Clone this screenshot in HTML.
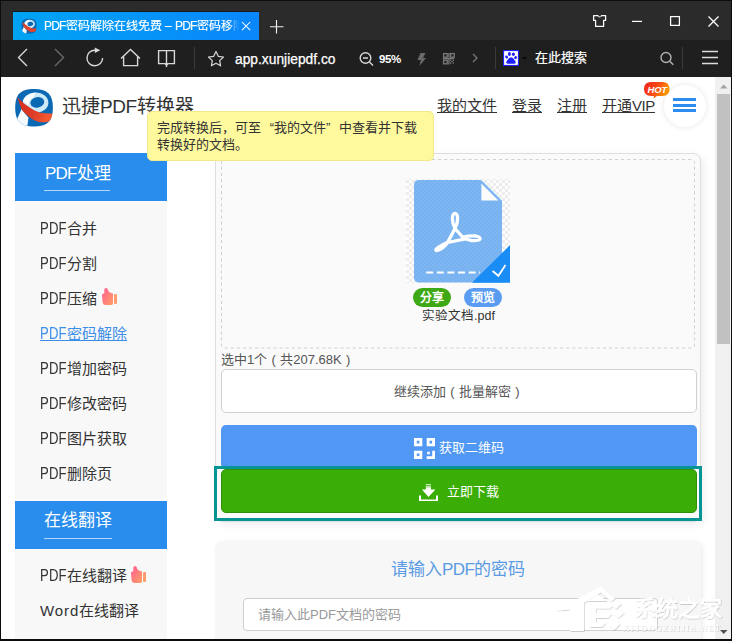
<!DOCTYPE html>
<html lang="zh-CN">
<head>
<meta charset="utf-8">
<style>
*{margin:0;padding:0;box-sizing:border-box}
html,body{width:732px;height:641px;overflow:hidden;background:#fff;font-family:"Liberation Sans",sans-serif;color:#333}
.a{position:absolute}
.t{white-space:nowrap;line-height:1}
svg{display:block;position:absolute;overflow:visible}
.nav{font-size:15px;color:#333;text-decoration:underline;margin-top:1px}
.si{left:40px;font-size:15px;color:#333}
.lp{display:inline-block;font-size:16px;transform:scaleX(0.82);transform-origin:0 0;width:27px;letter-spacing:0.2px}
.q{display:inline-block;width:13px}
.pill{top:292px;font-size:12px;color:#fff;font-weight:bold}
.pc{display:inline-block;width:13px;text-align:center}
</style>
</head>
<body>
<!-- window frame -->
<div class="a" style="left:0;top:0;width:732px;height:641px;background:#0d0d0d"></div>
<!-- titlebar -->
<div class="a" style="left:1px;top:1px;width:730px;height:39px;background:#2b2b2b"></div>
<!-- tab -->
<div class="a" style="left:13px;top:11px;width:246px;height:1px;background:#1a1a1a"></div>
<div class="a" style="left:13px;top:12px;width:246px;height:28px;background:linear-gradient(90deg,#00a4f4,#0a86fb)"></div>
<!-- toolbar -->
<div class="a" style="left:1px;top:40px;width:730px;height:37px;background:#1f1f1f"></div>
<!-- favicon -->
<svg style="left:21px;top:18px" width="16" height="16" viewBox="0 0 38 39">
<g clip-path="url(#sq)">
<rect width="38" height="39" fill="#0b68b3"/>
<path d="M6.3 21.1L13.5 29.7L12.2 39L1 39L0 33L2 31.2L5.6 23.3Z" fill="#f4fafd"/>
<ellipse cx="20.6" cy="14.6" rx="12.8" ry="10.2" fill="#cdeaf8"/>
<path d="M7.9 13Q9.5 6.5 20.5 4.4L18.5 9.6Q14 10.5 13.5 17.5Z" fill="#f7fcfe"/>
<ellipse cx="22.3" cy="14.4" rx="7" ry="5.3" transform="rotate(-12 22.3 14.4)" fill="#0b68b3"/>
<path d="M2.4 9.3C8 15 16 22 25.7 24.7C30 25.6 34 25.5 38 25.4L38 32.6C32 34.5 28 34.6 24.3 34C18 33 10 26 6.3 21.1Z" fill="#e5402a"/>
</g>
</svg>
<div class="a t" style="left:44px;top:19.5px;font-size:12px;color:#fff;-webkit-text-stroke:0.15px #fff;width:196px;overflow:hidden;-webkit-mask-image:linear-gradient(90deg,#000 185px,rgba(0,0,0,.35) 190px,transparent 196px)"><span style="letter-spacing:-0.8px">PDF</span>密码解除在线免费 – <span style="letter-spacing:-0.8px">PDF</span>密码移除</div>
<svg style="left:242px;top:22px" width="9" height="9"><path d="M0 0L8.2 8.2M8.2 0L0 8.2" stroke="#fff" stroke-width="1.05"/></svg>
<svg style="left:270px;top:20px" width="14" height="14"><path d="M6.5 0V13.5M0 6.7H13.5" stroke="#f0f0f0" stroke-width="1.15"/></svg>
<!-- window controls -->
<svg style="left:0;top:0" width="732" height="40" viewBox="0 0 732 40">
<path d="M593.6 15.6H597.8Q599.75 18 601.7 15.6H605.6V20.4H603.6V26.4H595.6V20.4H593.6Z" fill="none" stroke="#fff" stroke-width="1.25" stroke-linejoin="round"/>
<path d="M598.3 16Q599.75 17.6 601.2 16" stroke="#999" stroke-width="1" fill="none"/>
<rect x="632" y="20.8" width="10" height="1.2" fill="#fff"/>
<rect x="670.6" y="16.6" width="8.8" height="8.8" fill="none" stroke="#fff" stroke-width="1.25"/>
</svg>
<svg style="left:708px;top:16px" width="11" height="11"><path d="M0.5 0.5L10.5 10.5M10.5 0.5L0.5 10.5" stroke="#fff" stroke-width="1.3"/></svg>
<!-- toolbar icons -->
<svg style="left:0;top:40px" width="732" height="37" viewBox="0 40 732 37">
<g fill="none" stroke-width="1.4">
<path d="M27 49L18.5 57.5L27 66" stroke="#d8d8d8"/>
<path d="M55 49L63.5 57.5L55 66" stroke="#6a6a6a"/>
<path d="M102.6 58A7.8 7.8 0 1 1 95 50.2" stroke="#d8d8d8"/>
<path d="M121 58.6L130.5 49.4L140 58.6M123.6 56V65.6H137.6V56" stroke="#d8d8d8"/>
<path d="M158.6 50.6H166.5V65.5L165 63.6H158.6ZM174.4 50.6H166.5V65.5L168 63.6H174.4Z" stroke="#d8d8d8"/>
<path d="M194.5 47V69" stroke="#3a3a3a" stroke-width="1"/>
<path d="M216 51.5L218.3 56.3L223.5 57L219.7 60.6L220.6 65.8L216 63.3L211.4 65.8L212.3 60.6L208.5 57L213.7 56.3Z" stroke="#d8d8d8" stroke-linejoin="round" stroke-width="1.2"/>
<circle cx="365.5" cy="58" r="5.3" stroke="#d8d8d8"/>
<path d="M369.5 62L373 65.5M363 58H368" stroke="#d8d8d8"/>
<path d="M495.5 47V69" stroke="#3a3a3a" stroke-width="1"/>
<path d="M473 54L477 58L473 62" stroke="#777" stroke-width="1.3"/>
<circle cx="666" cy="57.5" r="5" stroke="#b0b0b0"/>
<path d="M669.8 61.3L673.3 64.8" stroke="#b0b0b0" stroke-width="1.5"/>
<path d="M682.5 47V69" stroke="#3a3a3a" stroke-width="1"/>
<path d="M702 51.5H718M702 57.5H718M702 63.5H718" stroke="#dcdcdc" stroke-width="1.5"/>
</g>
<path d="M94.8 47.6L100.3 50.3L94.8 53Z" fill="#d8d8d8"/>
<path d="M420.5 53H425.5L423 58H426L419.5 66L420.8 60H417.5Z" fill="#6a6a6a"/>
<g fill="none" stroke="#7a7a7a" stroke-width="1.3">
<rect x="443.6" y="53.6" width="3.6" height="3.6"/><rect x="450.6" y="53.6" width="3.6" height="3.6"/><rect x="443.6" y="60.2" width="3.6" height="3.6"/>
<path d="M448.9 53V57.8M448.9 59.6V64.5M442.8 58.6H454.2"/>
</g>
<g fill="#7a7a7a"><rect x="450" y="59.6" width="1.3" height="1.3"/><rect x="452.7" y="59.6" width="1.3" height="1.3"/><rect x="451.35" y="61" width="1.3" height="1.3"/><rect x="450" y="62.4" width="1.3" height="1.3"/><rect x="452.7" y="62.4" width="1.3" height="1.3"/></g>
<rect x="503" y="50" width="16" height="16" fill="#1f1fff"/>
<rect x="504.1" y="51.1" width="13.8" height="13.8" fill="#fff"/>
<g fill="#1f1fff"><ellipse cx="509.4" cy="54" rx="1.5" ry="1.9"/><ellipse cx="513.4" cy="54.2" rx="1.5" ry="1.8"/><ellipse cx="506.6" cy="57" rx="1.3" ry="1.6" transform="rotate(-30 506.6 57)"/><ellipse cx="515.6" cy="57.6" rx="1.3" ry="1.6" transform="rotate(30 515.6 57.6)"/><path d="M511 57.2Q509 57.5 507.5 60Q505.8 62 506.5 63.2Q507.5 64 511 63.8Q514.5 64 515.5 63.2Q516.2 62 514.5 60Q513 57.5 511 57.2Z"/></g>
<path d="M522 57H527L524.5 60Z" fill="#0a0a0a"/>
</svg>
<div class="a t" id="url" style="left:235px;top:53px;font-size:13.8px;color:#fff;-webkit-text-stroke:0.25px #fff">app.xunjiepdf.co</div>
<div class="a t" style="left:379px;top:53.5px;font-size:11.5px;color:#fff;font-weight:bold;letter-spacing:-0.45px">95%</div>
<div class="a t" style="left:535px;top:51px;font-size:13px;color:#fff;-webkit-text-stroke:0.2px #fff">在此搜索</div>

<!-- content -->
<div class="a" id="content" style="left:1px;top:77px;width:714px;height:562px;background:#fff;overflow:hidden"></div>
<!-- page header -->
<svg style="left:15px;top:88px" width="38" height="39" viewBox="0 0 38 39">
<defs><clipPath id="sq"><path d="M19 1C32 1 37.9 6 37.9 19.7S32 38.4 19 38.4S0.2 33.5 0.2 19.7S6 1 19 1Z"/></clipPath>
<linearGradient id="rg" x1="0" y1="0" x2="1" y2="0.3"><stop offset="0" stop-color="#d42a1c"/><stop offset="0.6" stop-color="#dc3d28"/><stop offset="1" stop-color="#f5582f"/></linearGradient></defs>
<g clip-path="url(#sq)">
<rect width="38" height="39" fill="#0b68b3"/>
<path d="M6.3 21.1L13.5 29.7L12.2 39L1 39L0 33L2 31.2L5.6 23.3Z" fill="#f4fafd"/>
<ellipse cx="20.6" cy="14.6" rx="12.8" ry="10.2" fill="#cdeaf8"/>
<path d="M7.9 13Q9.5 6.5 20.5 4.4L18.5 9.6Q14 10.5 13.5 17.5Z" fill="#f7fcfe"/>
<ellipse cx="22.3" cy="14.4" rx="7" ry="5.3" transform="rotate(-12 22.3 14.4)" fill="#0b68b3"/>
<path d="M2.4 9.3C8 15 16 22 25.7 24.7C30 25.6 34 25.5 38 25.4L38 32.6C32 34.5 28 34.6 24.3 34C18 33 10 26 6.3 21.1Z" fill="url(#rg)"/>
</g>
</svg>
<div class="a t" id="brand" style="left:62px;top:97px;font-size:19px;color:#333">迅捷<span style="letter-spacing:-0.5px">PDF</span>转换器</div>
<div class="a t nav" style="left:437px;top:97px">我的文件</div>
<div class="a t nav" style="left:512px;top:97px">登录</div>
<div class="a t nav" style="left:557px;top:97px">注册</div>
<div class="a t nav" style="left:602px;top:97px">开通<span style="letter-spacing:-0.4px">VIP</span></div>
<!-- hot badge -->
<svg style="left:644px;top:82px" width="26" height="17" viewBox="0 0 26 17">
<defs><linearGradient id="hg" x1="0" y1="0" x2="1" y2="0.4"><stop offset="0" stop-color="#f0201e"/><stop offset="0.55" stop-color="#f84a14"/><stop offset="1" stop-color="#ff9a00"/></linearGradient></defs>
<path d="M7 0H18.5Q25.5 0 25.5 7Q25.5 14 18.5 14H13L9.5 16.5L10 14H7Q0 14 0 7Q0 0 7 0Z" fill="url(#hg)"/>
<text x="13.2" y="10.8" font-size="9.5" font-weight="bold" font-style="italic" fill="#fff" text-anchor="middle" font-family="Liberation Sans" letter-spacing="-0.3">HOT</text>
</svg>
<!-- menu circle -->
<div class="a" style="left:664px;top:85px;width:42px;height:42px;border-radius:50%;background:#fff;box-shadow:0 0 6px rgba(0,0,0,.10)"></div>
<div class="a" style="left:673px;top:98px;width:23px;height:3px;background:#2d8cf0"></div>
<div class="a" style="left:673px;top:104px;width:23px;height:3px;background:#2d8cf0"></div>
<div class="a" style="left:673px;top:109px;width:23px;height:3px;background:#2d8cf0"></div>

<!-- sidebar -->
<div class="a" style="left:15px;top:153px;width:152px;height:490px;background:#f8f8f8"></div>
<div class="a" style="left:15px;top:153px;width:152px;height:48px;background:#288dec"></div>
<div class="a t" id="side1" style="left:45px;top:165px;font-size:17px;color:#fff"><span style="letter-spacing:-0.8px">PDF</span>处理</div>
<div class="a" style="left:44px;top:190px;width:66px;height:1px;background:rgba(255,255,255,.65)"></div>
<div class="a t si" style="top:221px"><span class="lp">PDF</span>合并</div>
<div class="a t si" style="top:256px"><span class="lp">PDF</span>分割</div>
<div class="a t si" style="top:291px"><span class="lp">PDF</span>压缩</div>
<div class="a" style="left:40px;top:340px;width:87px;height:1px;background:#3c8ee8"></div>
<div class="a t si" style="top:326px;color:#3c8ee8"><span class="lp">PDF</span>密码解除</div>
<div class="a t si" style="top:361px"><span class="lp">PDF</span>增加密码</div>
<div class="a t si" style="top:396px"><span class="lp">PDF</span>修改密码</div>
<div class="a t si" style="top:431px"><span class="lp">PDF</span>图片获取</div>
<div class="a t si" style="top:466px"><span class="lp">PDF</span>删除页</div>
<div class="a" style="left:15px;top:501px;width:152px;height:48px;background:#288dec"></div>
<div class="a t" id="side2" style="left:44px;top:512px;font-size:17px;color:#fff">在线翻译</div>
<div class="a" style="left:44px;top:538px;width:68px;height:1px;background:rgba(255,255,255,.65)"></div>
<div class="a t si" style="top:568px"><span class="lp">PDF</span>在线翻译</div>
<div class="a t si" style="top:603px"><span style="letter-spacing:0.9px">Word</span>在线翻译</div>
<!-- thumbs -->
<svg style="left:98px;top:284px" width="24" height="24" viewBox="0 0 24 24">
<defs><linearGradient id="tg" x1="0" y1="0" x2="1" y2="1"><stop offset="0" stop-color="#ff5a92"/><stop offset="1" stop-color="#ffa266"/></linearGradient></defs>
<path d="M4 11Q4 9.5 5.5 9.5H6.3V6Q6.3 4 8 4Q9.6 4 10 6Q10.6 8.6 15 9.5V20Q14.6 21 13 21H7.5Q5 21 4.6 18Z" fill="url(#tg)"/>
<rect x="16" y="10" width="3" height="10" rx="1" fill="#ff9c6e"/>
</svg>
<svg style="left:127px;top:562px" width="24" height="24" viewBox="0 0 24 24">
<path d="M4 11Q4 9.5 5.5 9.5H6.3V6Q6.3 4 8 4Q9.6 4 10 6Q10.6 8.6 15 9.5V20Q14.6 21 13 21H7.5Q5 21 4.6 18Z" fill="url(#tg)"/>
<rect x="16" y="10" width="3" height="10" rx="1" fill="#ff9c6e"/>
</svg>
<!-- card 1 -->
<div class="a" style="left:215px;top:153px;width:486px;height:369px;background:#fafafa;border:1px solid #dedede;border-radius:8px;box-shadow:3px 3px 8px rgba(0,0,0,.07)"></div>
<svg style="left:215px;top:153px" width="486" height="200" viewBox="215 153 486 200"><rect x="221.5" y="159.5" width="473" height="188.5" rx="3" fill="none" stroke="#d0d0d0" stroke-width="1" stroke-dasharray="3.2 2.9"/></svg>
<!-- file icon -->
<svg style="left:406px;top:178px" width="106" height="106" viewBox="406 178 106 106">
<defs><pattern id="ck" x="406" y="180" width="6" height="6" patternUnits="userSpaceOnUse"><rect width="6" height="6" fill="#fdfdfd"/><rect width="3" height="3" fill="#ececec"/><rect x="3" y="3" width="3" height="3" fill="#ececec"/></pattern>
<pattern id="ck2" x="406" y="180" width="4" height="4" patternUnits="userSpaceOnUse"><rect width="4" height="4" fill="#7db6f2"/><rect width="2" height="2" fill="#77b1ee"/><rect x="2" y="2" width="2" height="2" fill="#77b1ee"/></pattern></defs>
<rect x="406" y="179" width="104" height="104" fill="url(#ck)"/>
<path d="M419 180H481.2L502 200.8V282.6H419Q414 282.6 414 277.6V185Q414 180 419 180Z" fill="url(#ck2)"/>
<path d="M481.4 183.6V200.6H498.4Z" fill="#fbfbfb"/>
<path d="M510 245.3V282.6H472.4Z" fill="#1a8cf5"/>
<path d="M492.6 271L498.4 275.8L505.5 265" fill="none" stroke="#fff" stroke-width="1.8"/>
<path d="M426.2 272.5H480" stroke="#fff" stroke-width="2" stroke-dasharray="7 3.6"/>
<path d="M472.4 282.6L510 245.3V282.6Z" fill="#1a8cf5"/>
<path d="M492.6 271L498.4 275.8L505.5 265" fill="none" stroke="#fff" stroke-width="1.8"/>
<g fill="none" stroke="#fff" stroke-width="3.3" stroke-linecap="round" stroke-linejoin="round">
<path d="M447.5 242.5L455 228.5Q452.4 224 452.4 218.5Q452.6 213.3 455 213.3Q457.4 213.3 457.6 218.5Q457.6 224 455 228.5L462.5 237"/>
<path d="M462.5 237Q470 235.6 476 236Q480.3 236.8 480 239Q479.3 241 472 240.6Q466.5 239.8 462.5 237Z"/>
<path d="M447.5 242.5L465.5 238.8"/>
<path d="M447.5 242.5Q442 244.5 438 247.5Q435 249.8 436.2 250.6Q438.5 251 442.5 248Q446 245.2 447.5 242.5Z"/>
</g>
</svg>
<div class="a" style="left:413px;top:288px;width:38px;height:19px;border-radius:10px;background:#3ea914"></div>
<div class="a t pill" style="left:420px">分享</div>
<div class="a" style="left:464px;top:288px;width:38px;height:19px;border-radius:10px;background:#5a9cf1"></div>
<div class="a t pill" style="left:471px">预览</div>
<div class="a t" id="fname" style="left:422px;top:309.5px;font-size:12.5px;color:#333">实验文档.pdf</div>
<div class="a t" id="sel" style="left:221px;top:353px;font-size:13px;color:#555">选中1个<span class="pc">(</span>共207.68K<span class="pc">)</span></div>
<div class="a" style="left:221px;top:369px;width:476px;height:44px;background:#fff;border:1px solid #d0d0d0;border-radius:5px"></div>
<div class="a t" id="cont" style="left:394px;top:385px;font-size:13px;color:#555">继续添加<span class="pc">(</span>批量解密<span class="pc">)</span></div>
<div class="a" style="left:221px;top:425px;width:476px;height:44px;background:#5198f4;border-radius:5px"></div>
<svg style="left:414px;top:438px" width="21" height="21" viewBox="0 0 21 21">
<path fill="#fff" fill-rule="evenodd" d="M0 0h8.3v8.3h-8.3zM2.8 2.8v2.6h2.6v-2.6zM12.7 0h8.3v8.3h-8.3zM15.5 2.8v2.6h2.6v-2.6zM0 12.7h8.3v8.3h-8.3zM2.8 15.5v2.6h2.6v-2.6z"/>
<path fill="#fff" d="M13.2 13.7h2.6v2.6h-2.6zM18.2 12.7h2.8v8.3h-8.3v-2.8h5.5z"/>
</svg>
<div class="a t" id="qr" style="left:439px;top:440.5px;font-size:13px;color:#fff">获取二维码</div>
<div class="a" style="left:221px;top:469px;width:476px;height:44px;background:#3aad07;border:1px solid #2f8f06;border-radius:5px"></div>
<svg style="left:419px;top:483px" width="19" height="18" viewBox="0 0 19 18">
<g fill="#fff"><rect x="6.8" y="1.1" width="5.2" height="1.1" opacity=".8"/><rect x="6.8" y="2.9" width="5.2" height="0.9" opacity=".8"/><path d="M6.8 4.2h5.2v2.4h4.4l-6.9 7.4L2.9 6.6h3.9z"/><path d="M0 12.5h2v3.9h15v-3.9h2v5.4H0z"/></g>
</svg>
<div class="a t" id="dl" style="left:447px;top:485px;font-size:13px;color:#fff">立即下载</div>
<div class="a" style="left:214px;top:466px;width:488px;height:55px;border:3px solid #069594"></div>

<!-- card 2 -->
<div class="a" style="left:215px;top:541px;width:486px;height:120px;background:#f7f7f7;border-radius:8px;box-shadow:2px 1px 5px rgba(0,0,0,.07)"></div>
<div class="a t" id="pwt" style="left:391px;top:561px;font-size:17px;color:#5a9be4">请输入<span style="letter-spacing:-0.6px">PDF</span>的密码</div>
<div class="a" style="left:243px;top:598px;width:415px;height:33px;background:#fff;border:1px solid #cfcfcf;border-radius:4px"></div>
<div class="a t" id="ph" style="left:258px;top:608px;font-size:13px;color:#999">请输入此PDF文档的密码</div>

<!-- tooltip -->
<div class="a" style="left:147px;top:111px;width:287px;height:50px;background:#fff99e;border:1px solid #f3e98a;border-radius:5px"></div>
<div class="a" id="tip" style="left:157px;top:119px;font-size:13px;line-height:17px;color:#333;white-space:nowrap">完成转换后，可至<span class="q" style="text-align:right">“</span>我的文件<span class="q">”</span>中查看并下载<br>转换好的文档。</div>

<!-- scrollbar -->
<div class="a" style="left:715px;top:77px;width:16px;height:562px;background:#f0f0f0"></div>
<svg style="left:715px;top:77px" width="16" height="562" viewBox="715 77 16 562">
<path d="M720 88.5H727.5L723.75 84.5Z" fill="#a3a3a3"/>
<rect x="717" y="94" width="13" height="250" fill="#c1c1c1"/>
<path d="M720 630H727.5L723.75 634Z" fill="#505050"/>
</svg>
<!-- watermark -->
<svg style="left:555px;top:584px" width="172" height="50" viewBox="555 584 172 50">
<defs><filter id="sh" x="-20%" y="-20%" width="140%" height="140%"><feDropShadow dx="0.6" dy="0.8" stdDeviation="0.7" flood-color="#000" flood-opacity="0.22"/></filter></defs>
<g filter="url(#sh)" fill="#fff">
<path d="M556.5 610.5L601 586L615 598.5L611 601.5L601 592.5L578 606V631H570V609.5Z"/>
<path d="M578 606L598 594.5L607 601H584V631H578Z"/>
<path d="M590 604H614L610 608.5H596V613.5H612L608 618H596V622.5H606L602 627H590Z"/>
<path d="M612 606L618 601L621 604L616 609ZM614 614L620 609L624 613L618 618ZM610 626L616 620L620 624L614 630Z"/>
<text x="634" y="615.5" font-size="22" font-weight="bold" font-family="Liberation Sans">系统之家</text>
<text x="623" y="630.5" font-size="8" font-family="Liberation Serif" letter-spacing="1.6">XITONGZHIJIA.NET</text>
</g>
</svg>
<div class="a" style="left:0;top:0;width:1px;height:641px;background:#0d0d0d"></div>
<div class="a" style="left:731px;top:0;width:1px;height:641px;background:#0d0d0d"></div>
<div class="a" style="left:0;top:639px;width:732px;height:2px;background:#0d0d0d"></div>
</body>
</html>
